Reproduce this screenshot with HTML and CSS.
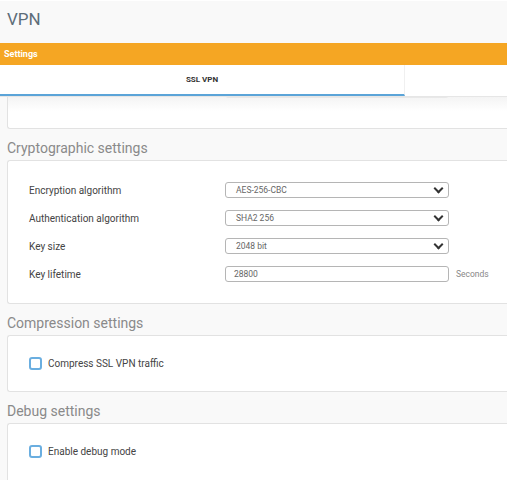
FILE: index.html
```html
<!DOCTYPE html>
<html lang="en">
<head>
    <meta charset="UTF-8">
    <title>VPN</title>
    <link rel="stylesheet" href="styles.css">
</head>
<body>

    <div class="page-title">
        <h1>VPN</h1>
    </div>

    <div class="panel-bar">Settings</div>

    <div class="tabs">
        <div class="tab active">SSL VPN</div>
        <div class="tab"></div>
    </div>

    <div class="content">
        <!-- box scrolled up under the tabs -->
        <div class="box box-cut">
            <div class="row">
                <span class="label"></span>
                <div class="field faded"></div>
            </div>
        </div>

        <h2>Cryptographic settings</h2>
        <div class="box">
            <div class="row">
                <span class="label">Encryption algorithm</span>
                <div class="field select">AES-256-CBC</div>
            </div>
            <div class="row">
                <span class="label">Authentication algorithm</span>
                <div class="field select">SHA2 256</div>
            </div>
            <div class="row">
                <span class="label">Key size</span>
                <div class="field select">2048 bit</div>
            </div>
            <div class="row">
                <span class="label">Key lifetime</span>
                <div class="field">28800</div>
                <span class="unit">Seconds</span>
            </div>
        </div>

        <h2>Compression settings</h2>
        <div class="box">
            <label class="check"><span class="checkbox"></span>Compress SSL VPN traffic</label>
        </div>

        <h2>Debug settings</h2>
        <div class="box box-last">
            <label class="check"><span class="checkbox"></span>Enable debug mode</label>
        </div>
    </div>

</body>
</html>
```

FILE: styles.css
```css
body {
    margin: 0;
    padding: 0;
    font-family: Roboto, "Liberation Sans", sans-serif;
    background-color: #f9f9f9;
    overflow: hidden;
}
.page-title {
    height: 42px;
    border-top: 1px solid #ffffff;
    padding-left: 7px;
}
.page-title h1 {
    margin: 0;
    font-size: 17px;
    font-weight: 400;
    line-height: 36px;
    color: #5d6d79;
}
.panel-bar {
    height: 22px;
    line-height: 22px;
    background-color: #f5a623;
    color: white;
    font-size: 9px;
    font-weight: bold;
    padding-left: 4px;
}
.tabs {
    display: flex;
    height: 31px;
    background: white;
    border-bottom: 1px solid #e6e6e6;
}
.tab {
    flex: 1;
    text-align: center;
    font-size: 8px;
    font-weight: bold;
    color: #333;
    line-height: 29px;
}
.tab.active {
    flex: 0 0 404px;
    border-right: 1px solid #f0f0f0;
    border-bottom: 2px solid #5ba4d8;
}
.content {
    padding-left: 7px;
}
.box {
    background: white;
    border: 1px solid #e2e2e2;
    border-right: none;
    border-radius: 3px 0 0 3px;
    padding: 21px 0 21px 21px;
    display: flex;
    flex-direction: column;
    gap: 12px;
}
.box-cut {
    height: 31px;
    padding-top: 0;
    padding-bottom: 0;
    border-top: none;
    border-radius: 0 0 0 3px;
    overflow: hidden;
    background: linear-gradient(#f4f4f4, white 14px);
}
.box-cut .row {
    margin-top: -15px;
}
.box-last {
    padding-bottom: 40px;
}
.row {
    display: flex;
    align-items: center;
    height: 16px;
}
.label {
    flex: 0 0 196px;
    font-size: 10px;
    color: #444;
}
.field {
    flex: 0 0 224px;
    box-sizing: border-box;
    height: 16px;
    border: 1px solid #b5b5b5;
    border-radius: 3px;
    padding-left: 8px;
    font-size: 8.5px;
    color: #666;
    line-height: 14px;
    position: relative;
}
.select {
    padding-left: 10px;
}
.select::after {
    content: "";
    position: absolute;
    right: 6px;
    top: 2px;
    width: 5px;
    height: 5px;
    border-right: 2px solid #333;
    border-bottom: 2px solid #333;
    transform: rotate(45deg);
}
.unit {
    margin-left: 7px;
    font-size: 8.5px;
    color: #888;
}
.faded {
    border-color: #e8e8e8;
}
h2 {
    margin: 0;
    padding: 11px 0 4px;
    font-size: 14px;
    line-height: 16px;
    font-weight: 400;
    color: #8a8a8a;
}
.check {
    display: flex;
    align-items: center;
    height: 13px;
    font-size: 10px;
    color: #444;
}
.checkbox {
    width: 9px;
    height: 9px;
    border: 2px solid #6aaee0;
    border-radius: 3px;
    margin-right: 6px;
    background: white;
}
```
